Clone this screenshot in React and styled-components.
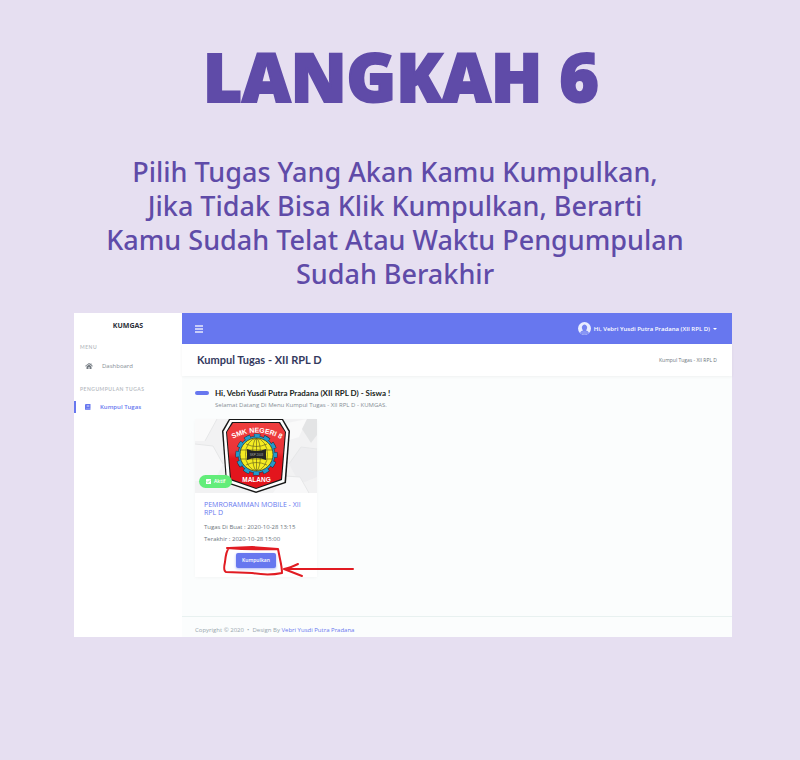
import React from "react";
import styled, { createGlobalStyle } from "styled-components";

const GlobalStyle = createGlobalStyle`
  * { box-sizing: border-box; }
  body { margin: 0; background: #e6dff1; }
  h1, h2, h3, p { margin: 0; }
  a { text-decoration: none; color: inherit; }
  button { font: inherit; border: 0; padding: 0; background: none; cursor: pointer; }
`;

const accent = "#6777ef";

const Page = styled.main`
  min-height: 100vh;
  padding: 28px 68px 0 74px;
  background: #e6dff1;
  color: #5f4ba8;
`;

const Title = styled.h1`
  padding-right: 4px;
  font: 800 67px/96px "Open Sans", sans-serif;
  -webkit-text-stroke: 2px currentColor;
  text-align: center;
  white-space: nowrap;
`;

const Instruction = styled.p`
  margin: 31px 0 22px;
  padding-right: 16px;
  font: 500 27px/34px "Noto Sans", "Open Sans", sans-serif;
  text-align: center;
  white-space: nowrap;
`;

const Dashboard = styled.section`
  display: grid;
  grid-template-columns: 108px 1fr;
  min-height: 324px;
  background: #fbfdfd;
  font-family: Lato, "Open Sans", sans-serif;
  font-size: 6px;
  color: #868e96;
`;

const Sidebar = styled.nav`
  display: flex;
  flex-direction: column;
  background: #fff;
`;

const Brand = styled.a`
  padding-top: 8px;
  text-align: center;
  font: 700 7px/10px "Open Sans", sans-serif;
  color: #2c2f38;
`;

const MenuLabel = styled.h3`
  margin-top: ${(p) => (p.$first ? 11 : 12)}px;
  padding-left: 6px;
  font: 600 5px/10px Lato, sans-serif;
  letter-spacing: 0.5px;
  color: #b4b8be;
`;

const MenuItem = styled.a`
  display: flex;
  align-items: center;
  gap: 9px;
  height: 12px;
  margin-top: ${(p) => (p.$active ? 7 : 8)}px;
  padding-left: ${(p) => (p.$active ? 9 : 11)}px;
  border-left: ${(p) => (p.$active ? `2px solid ${accent}` : "0")};
  color: ${(p) => (p.$active ? accent : "#868e96")};
  font: ${(p) => (p.$active ? 600 : 400)} 6px/12px "Open Sans", sans-serif;
`;

const Main = styled.div`
  display: flex;
  flex-direction: column;
  min-width: 0;
`;

const Topbar = styled.header`
  display: flex;
  align-items: center;
  justify-content: space-between;
  height: 31px;
  padding: 0 15px 0 13px;
  background: ${accent};
  color: #fff;
`;

const MenuButton = styled.button`
  display: flex;
  color: #fff;
`;

const UserButton = styled.button`
  display: flex;
  align-items: center;
  gap: 3px;
  color: #fff;
  font: 600 6px/12px "Open Sans", sans-serif;
`;

const Caret = styled.span`
  border: 2px solid transparent;
  border-top-color: #fff;
  border-bottom: 0;
`;

const PageHeader = styled.div`
  display: flex;
  align-items: center;
  justify-content: space-between;
  height: 32px;
  padding: 0 15px;
  background: #fff;
  box-shadow: 0 1px 3px rgba(0, 0, 0, 0.05);
`;

const PageTitle = styled.h2`
  font: 700 11px/14px Lato, sans-serif;
  color: #34395e;
`;

const Crumb = styled.span`
  font: 400 5px/10px "Open Sans", sans-serif;
  color: #6c757d;
`;

const Content = styled.div`
  flex: 1;
  padding: 11px 13px 16px;
`;

const Greeting = styled.div`
  display: grid;
  grid-template-columns: 14px 1fr;
  column-gap: 6px;
  align-items: center;
`;

const Dash = styled.span`
  height: 4px;
  border-radius: 2px;
  background: ${accent};
`;

const GreetingTitle = styled.h3`
  font: 700 8px/12px Lato, sans-serif;
  color: #191d21;
`;

const GreetingText = styled.p`
  grid-column: 2;
  font: 400 6px/12px "Open Sans", sans-serif;
`;

const Card = styled.article`
  position: relative;
  width: 122px;
  margin-top: 8px;
  padding-bottom: 9px;
  background: #fff;
  box-shadow: 0 1px 3px rgba(0, 0, 0, 0.03);
`;

const Cover = styled.div`
  position: relative;
  height: 74px;

  > svg { display: block; width: 100%; height: 100%; }
`;

const Badge = styled.span`
  position: absolute;
  left: 4px;
  bottom: 5px;
  display: flex;
  align-items: center;
  gap: 3px;
  height: 13px;
  padding: 0 7px;
  border-radius: 7px;
  background: #63ed7a;
  color: #fff;
  font: 600 5px/13px "Open Sans", sans-serif;
`;

const CardBody = styled.div`
  padding: 8px 9px 0;
  font: 400 6px/12px "Open Sans", sans-serif;
  color: #6c757d;
`;

const CardTitle = styled.h3`
  margin-bottom: 4px;
  font: 400 7px/8px "Open Sans", sans-serif;
  color: ${accent};
`;

const SubmitButton = styled.button`
  display: block;
  width: 40px;
  height: 15px;
  margin: 8px auto 0;
  border-radius: 2px;
  background: ${accent};
  box-shadow: 0 1px 3px #acb5f6;
  color: #fff;
  font: 600 5px/15px "Open Sans", sans-serif;
`;

const Annotation = styled.svg`
  position: absolute;
  left: 25px;
  top: 125px;
  pointer-events: none;
`;

const Footer = styled.footer`
  height: 21px;
  padding: 7px 13px 0;
  border-top: 1px solid #e8f1f0;
  font: 400 6px/12px "Open Sans", sans-serif;
  color: #98a6ad;

  a { color: ${accent}; }
`;

const HomeIcon = () => (
  <svg width="8" height="6" viewBox="0 0 16 12" fill="#747b82" aria-hidden="true">
    <path d="M8 0 0 6l1 1 7-5 7 5 1-1-3-2.300V1h-2v1.200zM8 3 3 6.800V12h4V8h2v4h4V6.800z" />
  </svg>
);

const BookIcon = () => (
  <svg width="6" height="6" viewBox="0 0 12 12" aria-hidden="true">
    <path fill={accent} d="M2 0h9v9l-.5 1 .5 2H2Q0 12 0 10V2Q0 0 2 0z" />
    <path d="M3.500 3h5M3.500 5h5M2 10h8" stroke="#fff" strokeWidth=".8" />
  </svg>
);

const BarsIcon = () => (
  <svg width="8" height="8" viewBox="0 0 8 8" aria-hidden="true">
    <path d="M0 1h8M0 4h8M0 7h8" stroke="#fff" strokeWidth="1.500" opacity=".85" />
  </svg>
);

const Avatar = () => (
  <svg width="13" height="13" viewBox="0 0 26 26" aria-hidden="true">
    <circle cx="13" cy="13" r="13" fill="#e9edff" />
    <path d="M5 20Q7 17 10 17Q7 13 8 9Q10 5 13 5T18 9Q19 13 16 17Q19 17 21 20Q22 23 19 24Q13 27 7 24Q4 23 5 20z" fill="#7584f1" />
    <path d="M5 21Q8 19 11 18h4Q18 19 21 21Q20 24 13 25Q6 24 5 21z" fill="#8997f5" />
  </svg>
);

const SchoolCover = () => (
  <svg viewBox="0 0 122 74" role="img" aria-label="SMK Negeri 8 Malang">
    <defs>
      <linearGradient id="red" x2="0" y2="1">
        <stop stopColor="#ef3e3e" />
        <stop offset=".45" stopColor="#ea3338" />
        <stop offset=".55" stopColor="#e3151d" />
      </linearGradient>
      <path id="arc" d="M36 21Q61 6 88 21" />
    </defs>
    <rect width="122" height="74" fill="#f2f2f3" />
    <path d="M0 0h22L10 22H0zM92 4l20-4-8 18-16 5z" fill="#fafafa" />
    <path d="M112 0h10v16l-6 8-9-14z" fill="#e3e4e5" />
    <path d="M94 45l12-17 16 2v28l-17 7z" fill="#ededef" />
    <path d="M90 57l15 1 9 16H78zM0 25l18 2 10 18-9 17H0z" fill="#f8f8f9" />
    <path d="M10 22 22 0M94 45l12-17 16 2M90 57l15 1 9 16M0 25l18 2 10 18" fill="none" stroke="#e6e7e8" />
    <path d="M34 0h54l7 12-4 52-30 10-30-10-4-52z" fill="#171717" />
    <path d="M35 1h52l6.500 11.500-4 50.500-28.500 9.500L32 63 28.500 12.500z" fill="#fff" />
    <path d="M37 3h48l6 10-4 48-26 9-26-9-4-48z" fill="#171717" />
    <path d="M38 4h46l6 9-4 47-25 9-25-9-4-47z" fill="url(#red)" />
    <circle cx="61.500" cy="35.500" r="18.500" fill="#249acb" stroke="#173440" strokeWidth=".6" />
    <circle cx="61.500" cy="35.500" r="19.500" fill="none" stroke="#173440" strokeWidth="3" strokeDasharray="6.500 3.710" strokeDashoffset="3.200" />
    <circle cx="61.500" cy="35.500" r="19" fill="none" stroke="#249acb" strokeWidth="3" strokeDasharray="5.500 4.450" strokeDashoffset="2.700" />
    <circle cx="61.500" cy="35.500" r="16.500" fill="#f4ec22" stroke="#332f16" strokeWidth=".7" />
    <g fill="none" stroke="#5b571c" strokeWidth=".6">
      <ellipse cx="61.500" cy="35.500" rx="4" ry="16" />
      <ellipse cx="61.500" cy="35.500" rx="11" ry="16" />
      <path d="M61.500 19v33M46 31h31M46 40h31M51 25q10 5 21 0M51 46q10-5 21 0" />
    </g>
    <path d="M52 30q9.500 4 19 0v11q-9.500-4-19 0z" fill="#222425" />
    <text x="61.500" y="37" textAnchor="middle" fill="#aaa" fontFamily="Liberation Sans, sans-serif" fontSize="3">SKP 2003</text>
    <text fill="#fff" fontFamily="Liberation Sans, sans-serif" fontWeight="700" fontSize="7">
      <textPath href="#arc" startOffset="50%" textAnchor="middle">SMK NEGERI 8</textPath>
    </text>
    <text x="61.500" y="63" textAnchor="middle" fill="#fff" fontFamily="Liberation Sans, sans-serif" fontWeight="700" fontSize="6.500">MALANG</text>
  </svg>
);

const CheckIcon = () => (
  <svg width="5" height="5" viewBox="0 0 10 10" aria-hidden="true">
    <rect width="10" height="10" rx="1" fill="#fff" />
    <path d="m2 5 2 2 4-4" fill="none" stroke="#52ca66" strokeWidth="1.500" />
  </svg>
);

export default function App() {
  return (
    <>
      <GlobalStyle />
      <Page>
        <Title>LANGKAH 6</Title>
        <Instruction>
          Pilih Tugas Yang Akan Kamu Kumpulkan,<br />
          Jika Tidak Bisa Klik Kumpulkan, Berarti<br />
          Kamu Sudah Telat Atau Waktu Pengumpulan<br />
          Sudah Berakhir
        </Instruction>
        <Dashboard>
          <Sidebar>
            <Brand href="#">KUMGAS</Brand>
            <MenuLabel $first>MENU</MenuLabel>
            <MenuItem href="#"><HomeIcon />Dashboard</MenuItem>
            <MenuLabel>PENGUMPULAN TUGAS</MenuLabel>
            <MenuItem href="#" $active><BookIcon />Kumpul Tugas</MenuItem>
          </Sidebar>
          <Main>
            <Topbar>
              <MenuButton aria-label="Menu"><BarsIcon /></MenuButton>
              <UserButton><Avatar />Hi, Vebri Yusdi Putra Pradana (XII RPL D)<Caret /></UserButton>
            </Topbar>
            <PageHeader>
              <PageTitle>Kumpul Tugas - XII RPL D</PageTitle>
              <Crumb>Kumpul Tugas - XII RPL D</Crumb>
            </PageHeader>
            <Content>
              <Greeting>
                <Dash />
                <GreetingTitle>Hi, Vebri Yusdi Putra Pradana (XII RPL D) - Siswa !</GreetingTitle>
                <GreetingText>Selamat Datang Di Menu Kumpul Tugas - XII RPL D - KUMGAS.</GreetingText>
              </Greeting>
              <Card>
                <Cover>
                  <SchoolCover />
                  <Badge><CheckIcon />Aktif</Badge>
                </Cover>
                <CardBody>
                  <CardTitle>PEMRORAMMAN MOBILE - XII RPL D</CardTitle>
                  <p>Tugas Di Buat : 2020-10-28 13:15</p>
                  <p>Terakhir : 2020-10-28 15:00</p>
                  <SubmitButton>Kumpulkan</SubmitButton>
                </CardBody>
                <Annotation width="136" height="36" viewBox="0 0 136 36" fill="none" stroke="#e11b22" strokeWidth="2" strokeLinecap="round" strokeLinejoin="round" aria-hidden="true">
                  <path d="M7 4Q31 6 58 5L60 15Q62 24 62 29Q48 32 32 29L6 28Q3 27 5 18Q6 7 9 4L32 3L58 5" />
                  <path d="M78 20Q70 24 64 25L82 32M64 25Q77 25 93 25L133 25" />
                </Annotation>
              </Card>
            </Content>
            <Footer>Copyright © 2020 &nbsp;•&nbsp; Design By <a href="#">Vebri Yusdi Putra Pradana</a></Footer>
          </Main>
        </Dashboard>
      </Page>
    </>
  );
}
